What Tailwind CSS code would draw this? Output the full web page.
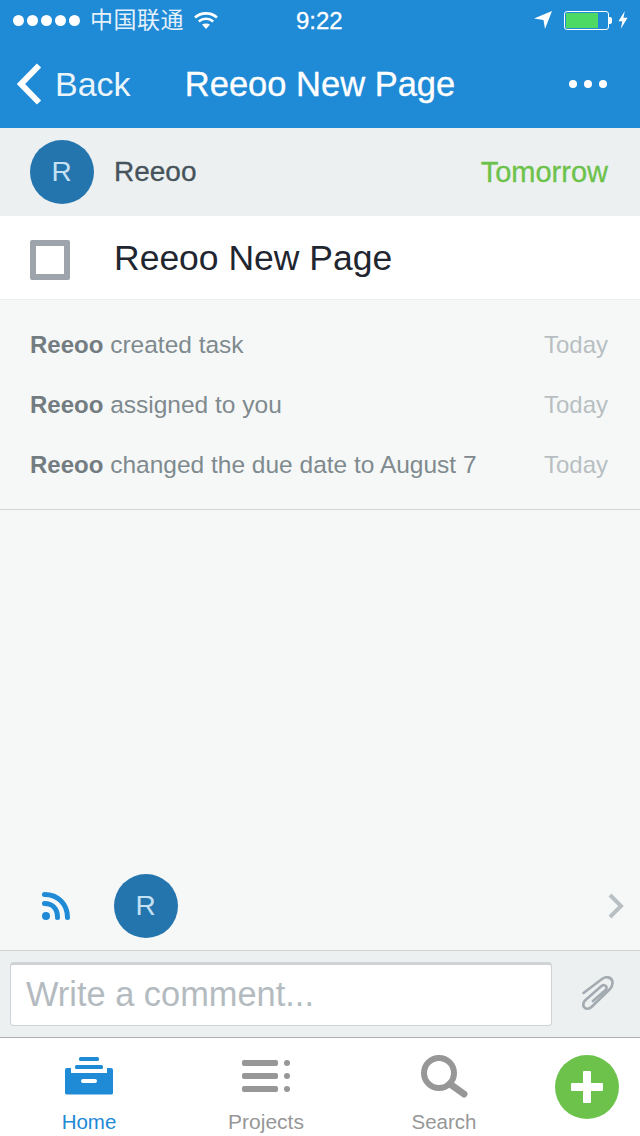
<!DOCTYPE html>
<html lang="en">
<head>
    <meta charset="UTF-8">
    <title>Reeoo New Page</title>
    <script src="https://cdn.jsdelivr.net/npm/@tailwindcss/browser@4"></script>
</head>
<body class="bg-[#f6f8f8] font-['Liberation_Sans','Noto_Sans_CJK_SC',sans-serif]">
<div class="w-[640px] h-[1136px] flex flex-col overflow-hidden">

    <!-- Status bar + nav -->
    <header class="bg-[#1f8ad6] text-white h-[128px] shrink-0">
        <div class="h-[40px] flex items-center justify-between pl-[13px] pr-[12px] relative">
            <div class="flex items-center">
                <div class="flex gap-[3px]">
                    <span class="w-[11px] h-[11px] rounded-full bg-white"></span>
                    <span class="w-[11px] h-[11px] rounded-full bg-white"></span>
                    <span class="w-[11px] h-[11px] rounded-full bg-white"></span>
                    <span class="w-[11px] h-[11px] rounded-full bg-white"></span>
                    <span class="w-[11px] h-[11px] rounded-full bg-white"></span>
                </div>
                <span class="ml-[10px] text-[23px] leading-none tracking-[0.5px] text-[#e4f1fa]">中国联通</span>
                <svg class="ml-[10px]" width="24" height="18" viewBox="0 0 24 18" fill="none" stroke="#fff" stroke-width="2.6">
                    <path d="M1 6.500 C7 1 17 1 23 6.500"/>
                    <path d="M4.800 10.500 C9 6.800 15 6.800 19.200 10.500"/>
                    <path d="M12 18 L8 13.600 C10.200 12 13.800 12 16 13.600 Z" fill="#fff" stroke="none"/>
                </svg>
            </div>
            <span class="absolute left-[296px] top-[8px] text-[24px] leading-[26px] font-normal [-webkit-text-stroke:0.3px_white]">9:22</span>
            <div class="flex items-center">
                <svg width="18" height="18" viewBox="0 0 18 18" fill="#fff"><path d="M0 7.500 L18 0 L11 18 L9.500 9 Z"/></svg>
                <div class="ml-[12px] w-[45px] h-[19px] border border-white rounded-[3px] p-[1px]">
                    <div class="w-[32px] h-full bg-[#4cd964]"></div>
                </div>
                <span class="w-[3px] h-[7px] bg-white rounded-r-[2px]"></span>
                <svg class="ml-[6px]" width="10" height="20" viewBox="0 0 11 20" fill="#fff"><path d="M7.500 0 L0.500 11.500 H4.800 L3 20 L10.500 7.500 H6 Z"/></svg>
            </div>
        </div>
        <nav class="h-[88px] flex items-center relative">
            <svg class="ml-[16px]" width="26" height="42" viewBox="0 0 26 42" fill="none" stroke="#fff" stroke-width="6"><path d="M23 2.500 L5 21 L23 39.500"/></svg>
            <span class="ml-[13px] text-[34px] leading-none text-[#eaf4fb]">Back</span>
            <h1 class="absolute left-0 right-0 text-center text-[34.500px] leading-none font-normal [-webkit-text-stroke:0.3px_white]">Reeoo New Page</h1>
            <div class="ml-auto mr-[33px] flex gap-[7px]">
                <span class="w-[8px] h-[8px] rounded-full bg-white"></span>
                <span class="w-[8px] h-[8px] rounded-full bg-white"></span>
                <span class="w-[8px] h-[8px] rounded-full bg-white"></span>
            </div>
        </nav>
    </header>

    <!-- Assignee row -->
    <section class="h-[88px] shrink-0 bg-[#ecf0f1] flex items-center pl-[30px] pr-[32px]">
        <div class="w-[64px] h-[64px] rounded-full bg-[#2475ae] text-[#c5e0f3] text-[28px] flex items-center justify-center pr-[1px]">R</div>
        <span class="ml-[20px] text-[28px] text-[#47535a] [-webkit-text-stroke:0.3px_#47535a]">Reeoo</span>
        <span class="ml-auto mt-[1px] text-[29px] text-[#6cc24a] [-webkit-text-stroke:0.3px_#6cc24a]">Tomorrow</span>
    </section>

    <!-- Task title -->
    <section class="h-[84px] shrink-0 bg-white border-b border-[#eceeee] flex items-center pl-[30px]">
        <div class="w-[40px] h-[40px] border-[6px] border-[#9da4ab] rounded-[2px] bg-white mt-[5px]"></div>
        <h2 class="ml-[44px] mt-[3px] text-[35.500px] font-normal text-[#1f2630]">Reeoo New Page</h2>
    </section>

    <!-- Activity -->
    <section class="h-[210px] shrink-0 border-b border-[#d2d5d6] pt-[15px] pl-[30px] pr-[32px] text-[24.500px] text-[#7f8a8e]">
        <div class="h-[60px] flex items-center justify-between"><p class="mt-[1px]"><b class="text-[24px] text-[#737c80]">Reeoo</b> created task</p><span class="text-[24px] text-[#b8bfc2]">Today</span></div>
        <div class="h-[60px] flex items-center justify-between"><p class="mt-[1px]"><b class="text-[24px] text-[#737c80]">Reeoo</b> assigned to you</p><span class="text-[24px] text-[#b8bfc2]">Today</span></div>
        <div class="h-[60px] flex items-center justify-between"><p class="mt-[1px]"><b class="text-[24px] text-[#737c80]">Reeoo</b> changed the due date to August 7</p><span class="text-[24px] text-[#b8bfc2]">Today</span></div>
    </section>

    <div class="flex-1"></div>

    <!-- Followers -->
    <section class="h-[76px] shrink-0 flex items-center pb-[12px] pl-[42px] pr-[16px]">
        <svg width="28" height="28" viewBox="0 0 28 28" fill="none" stroke="#1f8ad6" stroke-width="5" stroke-linecap="round">
            <circle cx="4" cy="24" r="4" fill="#1f8ad6" stroke="none"/>
            <path d="M2.500 11.500 C10.500 11.500 15.500 17 15.500 25.500"/>
            <path d="M2.500 2.500 C16 2.500 25.500 12 25.500 25.500"/>
        </svg>
        <div class="ml-[44px] w-[64px] h-[64px] rounded-full bg-[#2475ae] text-[#c5e0f3] text-[28px] flex items-center justify-center pr-[1px]">R</div>
        <svg class="ml-auto" width="16" height="26" viewBox="0 0 16 26" fill="none" stroke="#b9c0c4" stroke-width="4"><path d="M2 2 L13 13 L2 24"/></svg>
    </section>

    <!-- Comment bar -->
    <section class="h-[87px] shrink-0 bg-[#ecf0f1] border-t border-[#ced2d4] pt-[11px] pl-[10px] flex items-start">
        <div class="w-[542px] h-[64px] bg-white border border-[#cfd3d6] border-t-[3px] rounded-[4px] flex items-center pl-[15px] text-[34.400px] text-[#b4bbc0]">Write a comment...</div>
        <svg class="ml-[30px] mt-[14px]" width="32" height="35" viewBox="0 0 32 35" fill="none" stroke="#a3abb1" stroke-width="2.600" stroke-linecap="round" stroke-linejoin="round">
            <path d="M1.500 17 L20 3 C24 0 29 1 30.300 5 C31 8 30 11 27.500 13.500 L10 30.500 C7 33.500 3.500 33.500 2 31 C0.500 28.500 1.500 26 3.500 24 L19.500 10 C21.500 8.500 24 9 24.500 11 C25 12.500 24 13.500 23 14.500 L11 25"/>
        </svg>
    </section>

    <!-- Tab bar -->
    <footer class="h-[99px] shrink-0 bg-white border-t border-[#acb0b1] relative text-[20.500px] text-[#979797]">
        <div class="absolute left-[29px] top-[19px] w-[120px] flex flex-col items-center text-[#1f8ad6]">
            <svg width="48" height="38" viewBox="0 0 48 38" fill="#1f8ad6">
                <rect x="14" y="0" width="20" height="4" rx="1.500"/>
                <rect x="10" y="8" width="28" height="4" rx="1.500"/>
                <path d="M2 11 H6 V16 H42 V11 H46 Q48 11 48 13 V36 Q48 37.500 46 37.500 H2 Q0 37.500 0 36 V13 Q0 11 2 11 Z"/>
                <rect x="16" y="22" width="16" height="4" rx="2" fill="#fff"/>
            </svg>
            <span class="mt-[15px] leading-[24px]">Home</span>
        </div>
        <div class="absolute left-[206px] top-[19px] w-[120px] flex flex-col items-center">
            <svg width="48" height="38" viewBox="0 0 48 38" fill="#979797">
                <rect x="0" y="3" width="36" height="6" rx="2"/>
                <rect x="0" y="16" width="36" height="6" rx="2"/>
                <rect x="0" y="29" width="36" height="6" rx="2"/>
                <circle cx="45" cy="6" r="3"/>
                <circle cx="45" cy="19" r="3"/>
                <circle cx="45" cy="32" r="3"/>
            </svg>
            <span class="mt-[15px] leading-[24px] text-[21px]">Projects</span>
        </div>
        <div class="absolute left-[384px] top-[15px] w-[120px] flex flex-col items-center">
            <svg width="48" height="45" viewBox="0 0 48 45" fill="none" stroke="#979797">
                <circle cx="19" cy="20" r="15" stroke-width="6"/>
                <path d="M30 31 L44 41" stroke-width="7" stroke-linecap="round"/>
            </svg>
            <span class="mt-[12px] leading-[24px]">Search</span>
        </div>
        <div class="absolute left-[555px] top-[17px] w-[64px] h-[64px] rounded-full bg-[#6cc24a] flex items-center justify-center">
            <svg width="32" height="32" viewBox="0 0 32 32" fill="#fff"><path d="M12 1 Q12 0 13 0 H19 Q20 0 20 1 V12 H31 Q32 12 32 13 V19 Q32 20 31 20 H20 V31 Q20 32 19 32 H13 Q12 32 12 31 V20 H1 Q0 20 0 19 V13 Q0 12 1 12 H12 Z"/></svg>
        </div>
    </footer>
</div>
</body>
</html>
